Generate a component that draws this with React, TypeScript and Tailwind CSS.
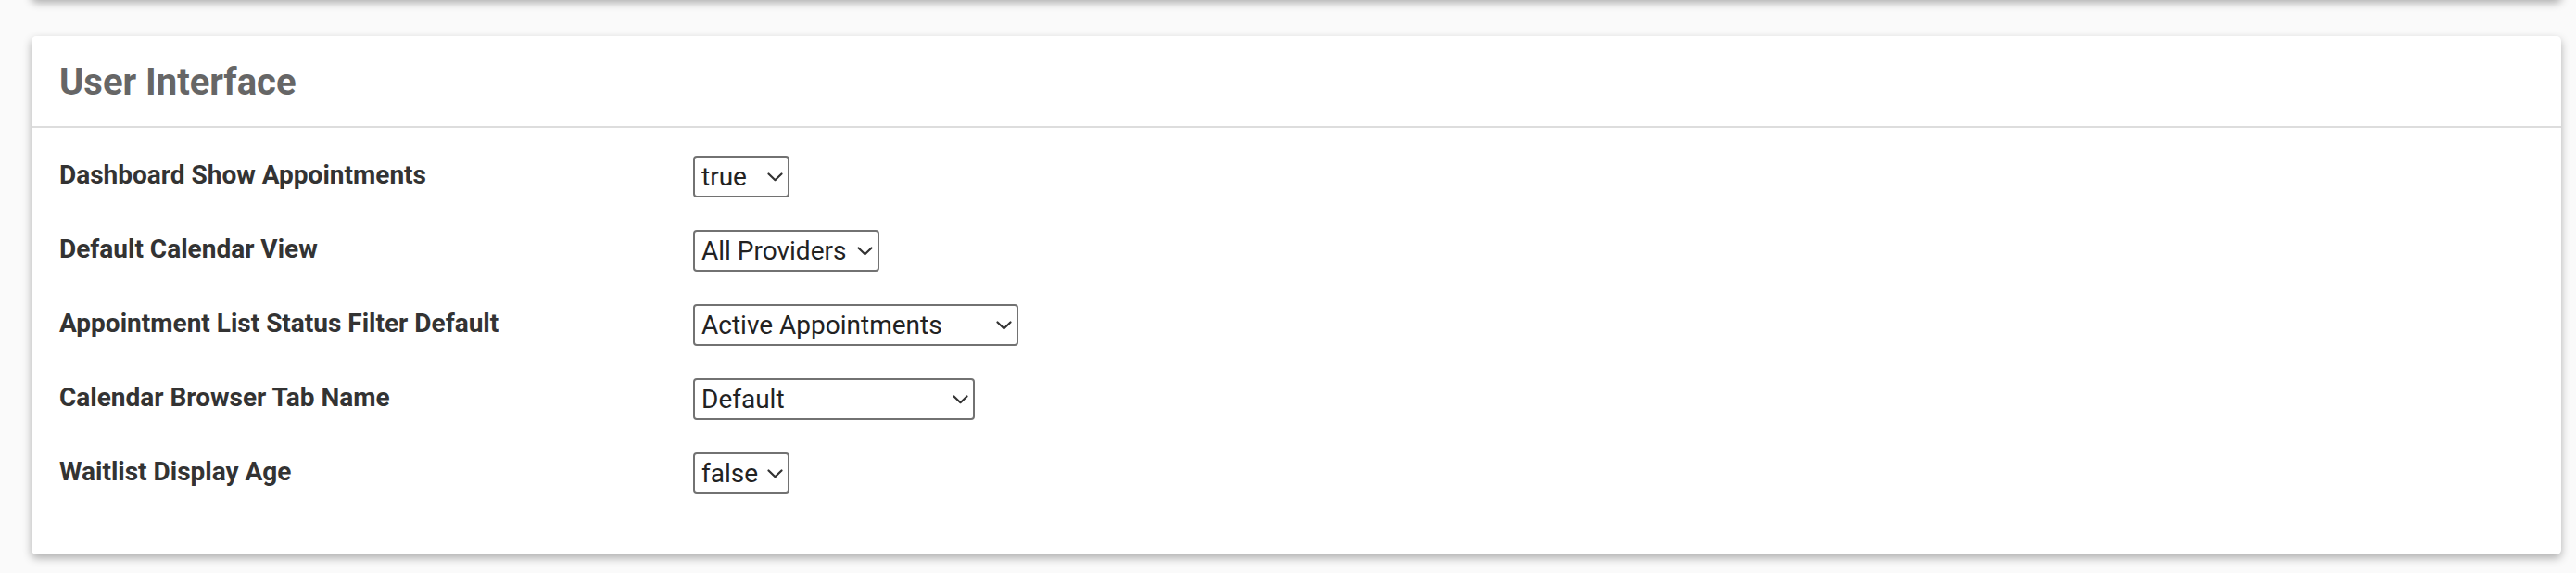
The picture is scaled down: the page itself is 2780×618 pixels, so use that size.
import React from "react";

type Row = { label: string; value: string; options: string[]; width: string };

const rows: Row[] = [
  { label: "Dashboard Show Appointments", value: "true", options: ["true", "false"], width: "w-[104px]" },
  { label: "Default Calendar View", value: "All Providers", options: ["All Providers", "My Schedule"], width: "w-[201px]" },
  { label: "Appointment List Status Filter Default", value: "Active Appointments", options: ["Active Appointments", "All Appointments"], width: "w-[351px]" },
  { label: "Calendar Browser Tab Name", value: "Default", options: ["Default", "Practice Name"], width: "w-[304px]" },
  { label: "Waitlist Display Age", value: "false", options: ["true", "false"], width: "w-[104px]" },
];

function Chevron() {
  return (
    <svg width="17" height="10" viewBox="0 0 17 10" className="pointer-events-none absolute right-[7px] top-1/2 -translate-y-1/2">
      <polyline points="1.5,1.5 8.5,8.2 15.5,1.5" fill="none" stroke="#333" strokeWidth="2.2" strokeLinecap="round" strokeLinejoin="round" />
    </svg>
  );
}

function Select({ value, options, width }: { value: string; options: string[]; width: string }) {
  return (
    <div className={`relative ${width}`}>
      <select
        defaultValue={value}
        className="block h-[45px] w-full appearance-none rounded-[4px] border-2 border-[#727272] bg-white pl-[7px] pr-[30px] text-[28px] leading-[41px] text-[#222] outline-none"
        style={{ fontFamily: "Roboto, 'Liberation Sans', sans-serif" }}
      >
        {options.map((o) => (
          <option key={o} value={o}>
            {o}
          </option>
        ))}
      </select>
      <Chevron />
    </div>
  );
}

export default function App() {
  return (
    <div
      className="min-h-screen overflow-hidden bg-[#fafafa] pl-[34px] pr-[16px]"
      style={{ fontFamily: "Roboto, 'Liberation Sans', sans-serif" }}
    >
      <div className="-mt-[41px] h-[40px] rounded-[5px] bg-white shadow-[0_4px_10px_rgba(0,0,0,0.32)]" />
      <div className="mt-[40px] rounded-[5px] bg-white shadow-[0_4px_10px_rgba(0,0,0,0.3)]">
        <div className="h-[99px] border-b-2 border-[#dddddd] px-[30px] pt-[28px]">
          <h4 className="text-[40px] font-bold leading-[44px] text-[#666666]">User Interface</h4>
        </div>
        <div className="px-[30px] pt-[30px] pb-[30px]">
          {rows.map((r) => (
            <div key={r.label} className="grid grid-cols-[684px_1fr] pb-[35px]">
              <label className="text-[28px] font-bold leading-[42px] text-[#333333]">{r.label}</label>
              <Select value={r.value} options={r.options} width={r.width} />
            </div>
          ))}
        </div>
      </div>
    </div>
  );
}
